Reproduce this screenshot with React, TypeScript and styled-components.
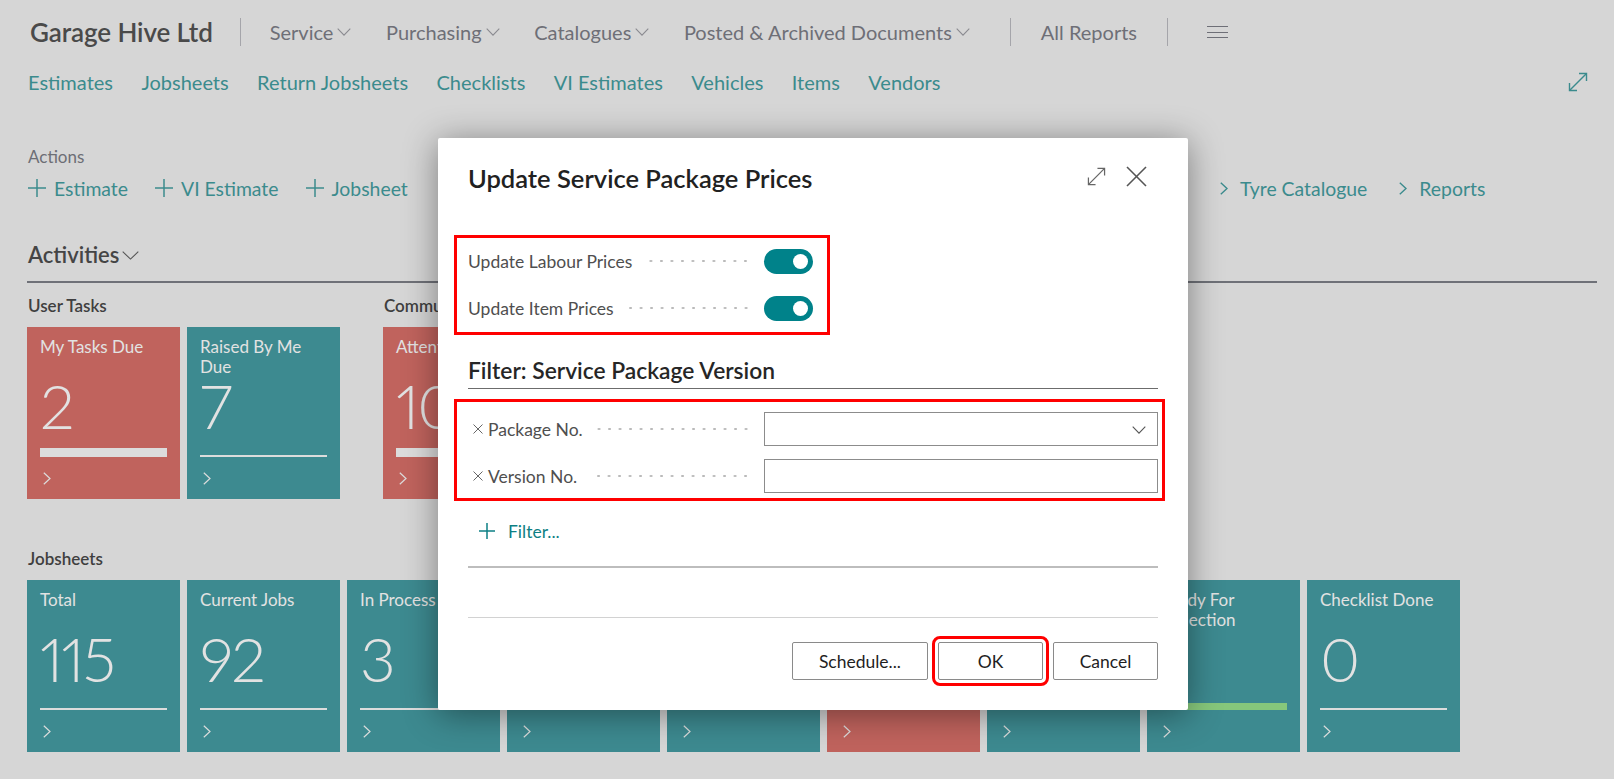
import React from 'react';
import styled, { createGlobalStyle } from 'styled-components';

const GlobalStyle = createGlobalStyle`
  html, body { margin: 0; padding: 0; background: #d6d6d6; }
  body { font-family: Lato, "Open Sans", "Liberation Sans", sans-serif; overflow: hidden; }
  * { box-sizing: border-box; }
`;

const FONT = `Lato, "Open Sans", "Liberation Sans", sans-serif`;

const Screen = styled.div`
  position: relative;
  width: 1614px;
  height: 779px;
  padding: 0 17px 0 27px;
`;

/* ---------- top bar ---------- */
const TopBar = styled.header`
  height: 64px;
  display: flex;
  align-items: center;
`;

const Brand = styled.div`
  font-size: 26px;
  font-weight: 600;
  color: #4a4a4a;
  padding-left: 3px;
  letter-spacing: -0.1px;
`;

const VSep = styled.span<{ $l: number; $r: number }>`
  width: 1px;
  height: 28px;
  background: #a5a5aa;
  margin: 0 ${p => p.$r}px 0 ${p => p.$l}px;
`;

const Menu = styled.nav`
  display: flex;
  align-items: center;
  gap: 34.6px;
`;

const MenuItem = styled.span`
  display: inline-flex;
  align-items: center;
  gap: 4px;
  font-size: 20px;
  color: #6e6f77;
`;

const Burger = styled.span`
  display: inline-flex;
  flex-direction: column;
  gap: 4.5px;
  margin-left: 9px;
  & > i { display: block; width: 21px; height: 1px; background: #6e6f77; }
`;

/* ---------- nav tabs ---------- */
const Tabs = styled.nav`
  height: 36px;
  display: flex;
  align-items: center;
  gap: 27.4px;
  padding-right: 9px;
`;

const Tab = styled.span`
  font-size: 20px;
  color: #3b8b8d;
  padding-left: 1px;
`;

const TabSpacer = styled.span`
  flex: 1;
`;

/* ---------- actions ---------- */
const ActionsLabel = styled.div`
  margin-top: 46px;
  font-size: 17px;
  line-height: 22px;
  color: #6d6e75;
  padding-left: 1px;
`;

const ActionRow = styled.div`
  margin-top: 5px;
  height: 30px;
  display: flex;
  align-items: center;
  gap: 26px;
`;

const Action = styled.span<{ $kind: 'plus' | 'go' }>`
  display: inline-flex;
  align-items: center;
  gap: ${p => (p.$kind === 'plus' ? 8 : 12)}px;
  padding-left: ${p => (p.$kind === 'plus' ? 1 : 6)}px;
  font-size: 19.4px;
  color: #3b8b8d;
  white-space: nowrap;
`;

/* ---------- activities ---------- */
const SectionHead = styled.div`
  margin-top: 37px;
  padding-bottom: 11px;
  border-bottom: 2px solid #6f7178;
  display: flex;
  align-items: center;
  gap: 3px;
  font-size: 22px;
  line-height: 30px;
  font-weight: 600;
  color: #454545;
  padding-left: 1px;
`;

const GroupsRow = styled.div`
  margin-top: 12px;
  display: flex;
  gap: 43px;
`;

const Group = styled.section<{ $top?: number }>`
  display: flex;
  flex-direction: column;
  gap: 10px;
  margin-top: ${p => p.$top ?? 0}px;
`;

const GroupLabel = styled.div`
  font-size: 17px;
  line-height: 22px;
  font-weight: 600;
  color: #3f3f3f;
  padding-left: 1px;
  white-space: nowrap;
`;

const TileRow = styled.div`
  display: flex;
  gap: 7px;
`;

const Tile = styled.div<{ $tone: 'teal' | 'red' }>`
  width: 153px;
  height: 172px;
  flex: none;
  padding: 10px 13px 0;
  display: flex;
  flex-direction: column;
  background: ${p => (p.$tone === 'red' ? '#c0635d' : '#3d8a90')};
  color: #e2e2e2;
  overflow: hidden;
`;

const TileTitle = styled.div`
  height: 40px;
  font-size: 17px;
  line-height: 20px;
`;

const TileValue = styled.div`
  margin-top: -3px;
  height: 62px;
  font-size: 62px;
  line-height: 62px;
  font-weight: 300;
  font-variant-numeric: proportional-nums;
  font-feature-settings: "pnum" 1;
  letter-spacing: -2px;
  white-space: nowrap;
`;

const BarTrack = styled.div`
  margin-top: 12px;
  height: 9px;
  display: flex;
  align-items: flex-end;
`;

const Bar = styled.div<{ $kind: 'thin' | 'thick' | 'green' }>`
  width: 100%;
  height: ${p => (p.$kind === 'thin' ? 2 : p.$kind === 'thick' ? 9 : 7)}px;
  background: ${p => (p.$kind === 'green' ? '#86c77b' : '#dcdcdc')};
`;

const TileGo = styled.div`
  margin-top: 15px;
  padding-left: 3px;
  line-height: 0;
`;

/* ---------- dialog ---------- */
const Dialog = styled.div`
  position: absolute;
  left: 438px;
  top: 138px;
  width: 750px;
  height: 572px;
  background: #fff;
  border-radius: 2px;
  box-shadow: 0 4px 34px rgba(0, 0, 0, 0.42);
  padding: 24px 30px 0;
  display: flex;
  flex-direction: column;
`;

const DialogHead = styled.div`
  height: 32px;
  display: flex;
  align-items: center;
  justify-content: space-between;
`;

const DialogTitle = styled.h1`
  margin: 0;
  font-size: 25.5px;
  line-height: 32px;
  font-weight: 600;
  color: #212121;
`;

const HeadIcons = styled.div`
  display: flex;
  align-items: center;
  gap: 20px;
  margin-right: 11px;
  margin-top: -4px;
`;

const Marked = styled.div<{ $inset: string; $width?: number; $top: number }>`
  position: relative;
  margin-top: ${p => p.$top}px;
  width: ${p => (p.$width ? `${p.$width}px` : 'auto')};
  display: flex;
  flex-direction: column;
  gap: 13px;
  &::after {
    content: '';
    position: absolute;
    inset: ${p => p.$inset};
    border: 3px solid #ff0000;
    pointer-events: none;
  }
`;

const FieldRow = styled.div`
  display: grid;
  grid-template-columns: 296px 1fr;
  align-items: center;
  height: 34px;
`;

const FieldCaption = styled.div`
  display: flex;
  align-items: center;
  padding-right: 13px;
  font-size: 17.5px;
  color: #4f4f4f;
  white-space: nowrap;
`;

const ClearMark = styled.span`
  display: inline-flex;
  margin: 0 5px 0 5px;
`;

const Leader = styled.span`
  flex: 1;
  height: 4px;
  margin-left: 14px;
  background-image: radial-gradient(circle, #b9b9b9 1px, transparent 1.4px);
  background-size: 10.5px 4px;
  background-repeat: repeat-x;
  background-position: right center;
`;

const Switch = styled.span`
  width: 49px;
  height: 25px;
  border-radius: 13px;
  background: #00828a;
  display: flex;
  align-items: center;
  justify-content: flex-end;
  padding: 0 5px;
  &::after {
    content: '';
    width: 15px;
    height: 15px;
    border-radius: 50%;
    background: #fff;
  }
`;

const FilterHead = styled.h2`
  margin: 31px 0 0;
  font-size: 22.8px;
  line-height: 28px;
  font-weight: 600;
  color: #262626;
  padding-bottom: 4px;
  border-bottom: 1px solid #6c6c6c;
`;

const InputWrap = styled.div`
  position: relative;
  height: 34px;
`;

const Input = styled.input`
  width: 100%;
  height: 34px;
  border: 1px solid #8c8c8c;
  border-radius: 0;
  background: #fff;
  padding: 0 36px 0 8px;
  font: 17px ${FONT};
  outline: none;
`;

const InputChevron = styled.span`
  position: absolute;
  right: 12px;
  top: 14px;
  line-height: 0;
  pointer-events: none;
`;

const AddFilter = styled.div`
  margin-top: 21px;
  height: 34px;
  display: flex;
  align-items: center;
  gap: 13px;
  padding-left: 11px;
  font-size: 17.5px;
  color: #0d7f84;
`;

const Rule = styled.hr<{ $strong?: boolean }>`
  margin: ${p => (p.$strong ? '18px 0 0' : '49px 0 0')};
  border: 0;
  height: ${p => (p.$strong ? 2 : 1)}px;
  background: ${p => (p.$strong ? '#bdbdbd' : '#d2d2d2')};
`;

const Footer = styled.div`
  margin-top: 24px;
  display: flex;
  justify-content: flex-end;
  gap: 10px;
`;

const Button = styled.button<{ $marked?: boolean; $pad: number }>`
  height: 38px;
  min-width: 105px;
  padding: 0 ${p => p.$pad}px;
  background: #fff;
  border: 1px solid #8a8a8a;
  border-radius: 2px;
  font: 17.5px ${FONT};
  color: #1f1f1f;
  ${p => (p.$marked ? 'outline: 3px solid #ff0000; outline-offset: 3px;' : '')}
`;

/* ---------- icons ---------- */
const DownChevron = ({ w = 14, h = 8, color = '#8a8a90' }: { w?: number; h?: number; color?: string }) => (
  <svg width={w} height={h} viewBox={`0 0 ${w} ${h}`} fill="none">
    <polyline points={`0.7,0.7 ${w / 2},${h - 0.9} ${w - 0.7},0.7`} stroke={color} strokeWidth="1.1" />
  </svg>
);

const Plus = ({ size = 18, color = '#3b8b8d', sw = 1.5 }: { size?: number; color?: string; sw?: number }) => (
  <svg width={size} height={size} viewBox={`0 0 ${size} ${size}`} fill="none">
    <line x1={size / 2} y1="0" x2={size / 2} y2={size} stroke={color} strokeWidth={sw} />
    <line x1="0" y1={size / 2} x2={size} y2={size / 2} stroke={color} strokeWidth={sw} />
  </svg>
);

const RightChevron = ({ w = 8, h = 13, color = '#3b8b8d', sw = 1.4 }: { w?: number; h?: number; color?: string; sw?: number }) => (
  <svg width={w} height={h} viewBox={`0 0 ${w} ${h}`} fill="none">
    <polyline points={`0.8,0.8 ${w - 1},${h / 2} 0.8,${h - 0.8}`} stroke={color} strokeWidth={sw} />
  </svg>
);

const ExpandIcon = ({ size = 20, color = '#666', sw = 1.4 }: { size?: number; color?: string; sw?: number }) => (
  <svg width={size} height={size} viewBox="0 0 20 20" fill="none">
    <line x1="1.5" y1="18.5" x2="18.5" y2="1.5" stroke={color} strokeWidth={sw} />
    <polyline points="11,1.5 18.5,1.5 18.5,9" stroke={color} strokeWidth={sw} />
    <polyline points="1.5,11 1.5,18.5 9,18.5" stroke={color} strokeWidth={sw} />
  </svg>
);

const CloseIcon = () => (
  <svg width="21" height="21" viewBox="0 0 21 21" fill="none">
    <line x1="1" y1="1" x2="20" y2="20" stroke="#555" strokeWidth="1.6" />
    <line x1="20" y1="1" x2="1" y2="20" stroke="#555" strokeWidth="1.6" />
  </svg>
);

const SmallX = () => (
  <svg width="10" height="10" viewBox="0 0 10 10" fill="none">
    <line x1="0.5" y1="0.5" x2="9.5" y2="9.5" stroke="#666" strokeWidth="1" />
    <line x1="9.5" y1="0.5" x2="0.5" y2="9.5" stroke="#666" strokeWidth="1" />
  </svg>
);

/* ---------- data ---------- */
type TileData = { title: string; value: string; tone: 'teal' | 'red'; bar: 'thin' | 'thick' | 'green' };

const userTasks: TileData[] = [
  { title: 'My Tasks Due', value: '2', tone: 'red', bar: 'thick' },
  { title: 'Raised By Me Due', value: '7', tone: 'teal', bar: 'thin' },
];

const commTiles: TileData[] = [
  { title: 'Attention', value: '10', tone: 'red', bar: 'thick' },
  { title: 'Unread', value: '4', tone: 'teal', bar: 'thin' },
];

const jobTiles: TileData[] = [
  { title: 'Total', value: '115', tone: 'teal', bar: 'thin' },
  { title: 'Current Jobs', value: '92', tone: 'teal', bar: 'thin' },
  { title: 'In Process', value: '3', tone: 'teal', bar: 'thin' },
  { title: 'Awaiting Parts', value: '6', tone: 'teal', bar: 'thin' },
  { title: 'Awaiting Approval', value: '2', tone: 'teal', bar: 'thin' },
  { title: 'Overdue', value: '8', tone: 'red', bar: 'thick' },
  { title: 'Work Complete', value: '4', tone: 'teal', bar: 'thin' },
  { title: 'Ready For Collection', value: '', tone: 'teal', bar: 'green' },
  { title: 'Checklist Done', value: '0', tone: 'teal', bar: 'thin' },
];

const CueTile = ({ t }: { t: TileData }) => (
  <Tile $tone={t.tone}>
    <TileTitle>{t.title}</TileTitle>
    <TileValue>{t.value}</TileValue>
    <BarTrack>
      <Bar $kind={t.bar} />
    </BarTrack>
    <TileGo>
      <RightChevron w={8} h={13} color="#dcdcdc" sw={1.2} />
    </TileGo>
  </Tile>
);

const topMenu = ['Service', 'Purchasing', 'Catalogues', 'Posted & Archived Documents'];
const tabs = ['Estimates', 'Jobsheets', 'Return Jobsheets', 'Checklists', 'VI Estimates', 'Vehicles', 'Items', 'Vendors'];

export default function App() {
  return (
    <>
      <GlobalStyle />
      <Screen>
        <TopBar>
          <Brand>Garage Hive Ltd</Brand>
          <VSep $l={27} $r={29} />
          <Menu>
            {topMenu.map(m => (
              <MenuItem key={m}>
                {m}
                <DownChevron />
              </MenuItem>
            ))}
          </Menu>
          <VSep $l={40} $r={30} />
          <MenuItem>All Reports</MenuItem>
          <VSep $l={30} $r={30} />
          <Burger>
            <i />
            <i />
            <i />
          </Burger>
        </TopBar>

        <Tabs>
          {tabs.map(t => (
            <Tab key={t}>{t}</Tab>
          ))}
          <TabSpacer />
          <ExpandIcon size={20} color="#3b8b8d" sw={1.4} />
        </Tabs>

        <ActionsLabel>Actions</ActionsLabel>
        <ActionRow>
          <Action $kind="plus"><Plus />Estimate</Action>
          <Action $kind="plus"><Plus />VI Estimate</Action>
          <Action $kind="plus"><Plus />Jobsheet</Action>
          <Action $kind="go"><RightChevron />VI Checklist</Action>
          <Action $kind="go"><RightChevron />Service Packages</Action>
          <Action $kind="go"><RightChevron />Item Catalogue</Action>
          <Action $kind="go"><RightChevron />Labour Price Catalogue</Action>
          <Action $kind="go"><RightChevron />Tyre Catalogue</Action>
          <Action $kind="go"><RightChevron />Reports</Action>
        </ActionRow>

        <SectionHead>
          Activities
          <DownChevron w={17} h={9} color="#555" />
        </SectionHead>

        <GroupsRow>
          <Group>
            <GroupLabel>User Tasks</GroupLabel>
            <TileRow>
              {userTasks.map(t => <CueTile key={t.title} t={t} />)}
            </TileRow>
          </Group>
          <Group>
            <GroupLabel>Communications</GroupLabel>
            <TileRow>
              {commTiles.map(t => <CueTile key={t.title} t={t} />)}
            </TileRow>
          </Group>
        </GroupsRow>

        <Group $top={49}>
          <GroupLabel>Jobsheets</GroupLabel>
          <TileRow>
            {jobTiles.map(t => <CueTile key={t.title} t={t} />)}
          </TileRow>
        </Group>

        <Dialog role="dialog" aria-label="Update Service Package Prices">
          <DialogHead>
            <DialogTitle>Update Service Package Prices</DialogTitle>
            <HeadIcons>
              <ExpandIcon size={19} color="#666" sw={1.3} />
              <CloseIcon />
            </HeadIcons>
          </DialogHead>

          <Marked $top={50} $width={355} $inset="-9px -7px -10px -14px">
            <FieldRow>
              <FieldCaption>
                Update Labour Prices
                <Leader />
              </FieldCaption>
              <Switch role="switch" aria-checked="true" />
            </FieldRow>
            <FieldRow>
              <FieldCaption>
                Update Item Prices
                <Leader />
              </FieldCaption>
              <Switch role="switch" aria-checked="true" />
            </FieldRow>
          </Marked>

          <FilterHead>Filter: Service Package Version</FilterHead>

          <Marked $top={23} $inset="-13px -7px -8px -14px">
            <FieldRow>
              <FieldCaption>
                <ClearMark><SmallX /></ClearMark>
                Package No.
                <Leader />
              </FieldCaption>
              <InputWrap>
                <Input />
                <InputChevron><DownChevron w={14} h={8} color="#555" /></InputChevron>
              </InputWrap>
            </FieldRow>
            <FieldRow>
              <FieldCaption>
                <ClearMark><SmallX /></ClearMark>
                Version No.
                <Leader />
              </FieldCaption>
              <InputWrap>
                <Input />
              </InputWrap>
            </FieldRow>
          </Marked>

          <AddFilter>
            <Plus size={16} color="#0d7f84" sw={1.5} />
            Filter...
          </AddFilter>

          <Rule $strong />
          <Rule />

          <Footer>
            <Button $pad={26}>Schedule...</Button>
            <Button $pad={20} $marked>OK</Button>
            <Button $pad={20}>Cancel</Button>
          </Footer>
        </Dialog>
      </Screen>
    </>
  );
}
